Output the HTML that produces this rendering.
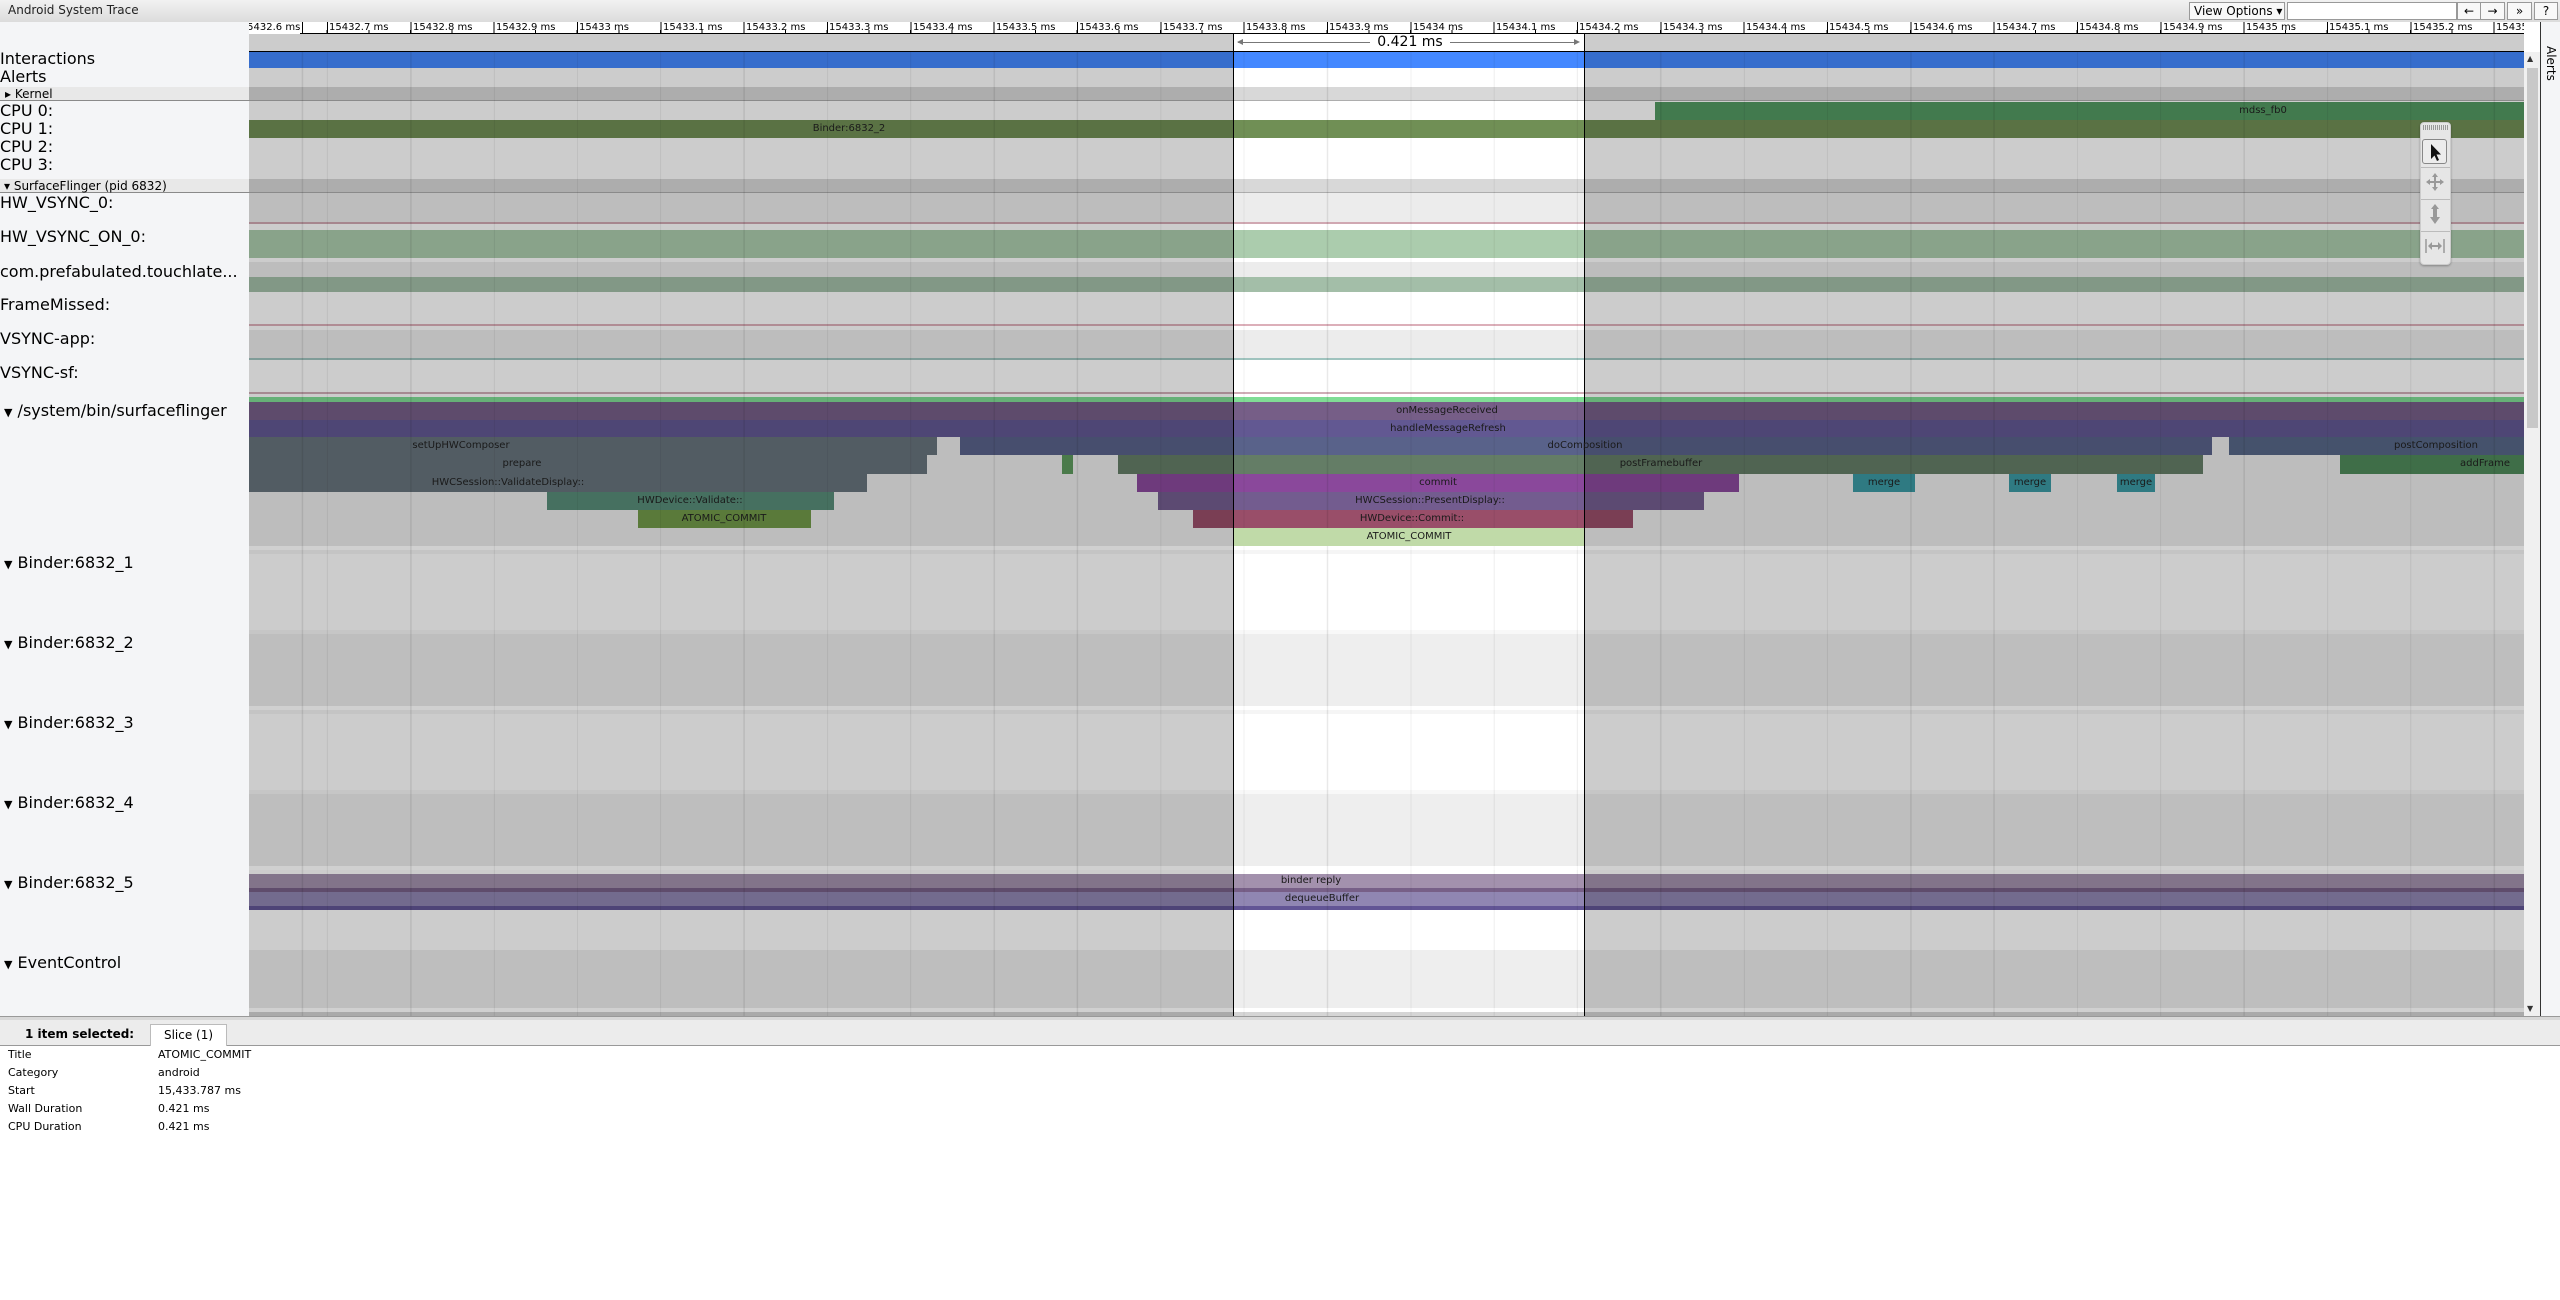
<!DOCTYPE html>
<html><head><meta charset="utf-8">
<style>
*{box-sizing:border-box}
body{margin:0;width:2560px;height:1300px;overflow:hidden;position:relative;background:#fff;font-family:"DejaVu Sans","Liberation Sans",sans-serif;color:#000}
.a{position:absolute}
.l{position:absolute;font-size:10px;color:#1a1a1a;text-align:center;white-space:nowrap;width:300px;line-height:18px}
.lab{position:absolute;left:0;font-size:16px;white-space:nowrap;line-height:18px}
.rl{position:absolute;top:22px;font-size:10px;line-height:12px;white-space:nowrap;color:#000}
.btn{position:absolute;top:2px;height:18px;border:1px solid #999;background:#f8f8f8;font-size:12px;line-height:16px;text-align:center}
.dt{position:absolute;font-size:11px;line-height:14px;white-space:nowrap}
</style></head><body>

<div class="a" style="left:0;top:0;width:2560px;height:22px;background:linear-gradient(#f2f2f2,#dcdcdc)"></div>
<div class="a" style="left:8px;top:3px;font-size:12px;line-height:15px;color:#222">Android System Trace</div>
<div class="btn" style="left:2189px;width:96px;text-align:left;padding-left:4px">View Options ▾</div>
<div class="btn" style="left:2287px;width:170px;background:#fff"></div>
<div class="btn" style="left:2457px;width:24px">←</div>
<div class="btn" style="left:2480px;width:25px">→</div>
<div class="btn" style="left:2507px;width:25px">»</div>
<div class="btn" style="left:2534px;width:24px">?</div>

<div class="a" style="left:0;top:22px;width:249px;height:994px;background:#f4f5f7"></div>

<div class="a" style="left:249px;top:22px;width:2275px;height:12px;background:#fff repeating-linear-gradient(to right,#000 0 1px,transparent 1px 83.333px);background-position:78px 0;overflow:hidden"></div>
<div class="a" style="left:249px;top:30px;width:2275px;height:4px;background:repeating-linear-gradient(to right,#000 0 1px,transparent 1px 41.666px);background-position:36px 0"></div>
<div class="a" style="left:249px;top:33px;width:2275px;height:1px;background:#000"></div>
<div class="a" style="left:249px;top:22px;width:2275px;height:12px;overflow:hidden">
<div class="rl" style="top:0;left:-5px;background:#fff">&nbsp;5432.6 ms</div>
<div class="rl" style="top:0;left:80px">15432.7 ms</div>
<div class="rl" style="top:0;left:164px">15432.8 ms</div>
<div class="rl" style="top:0;left:247px">15432.9 ms</div>
<div class="rl" style="top:0;left:330px">15433 ms</div>
<div class="rl" style="top:0;left:414px">15433.1 ms</div>
<div class="rl" style="top:0;left:497px">15433.2 ms</div>
<div class="rl" style="top:0;left:580px">15433.3 ms</div>
<div class="rl" style="top:0;left:664px">15433.4 ms</div>
<div class="rl" style="top:0;left:747px">15433.5 ms</div>
<div class="rl" style="top:0;left:830px">15433.6 ms</div>
<div class="rl" style="top:0;left:914px">15433.7 ms</div>
<div class="rl" style="top:0;left:997px">15433.8 ms</div>
<div class="rl" style="top:0;left:1080px">15433.9 ms</div>
<div class="rl" style="top:0;left:1164px">15434 ms</div>
<div class="rl" style="top:0;left:1247px">15434.1 ms</div>
<div class="rl" style="top:0;left:1330px">15434.2 ms</div>
<div class="rl" style="top:0;left:1414px">15434.3 ms</div>
<div class="rl" style="top:0;left:1497px">15434.4 ms</div>
<div class="rl" style="top:0;left:1580px">15434.5 ms</div>
<div class="rl" style="top:0;left:1664px">15434.6 ms</div>
<div class="rl" style="top:0;left:1747px">15434.7 ms</div>
<div class="rl" style="top:0;left:1830px">15434.8 ms</div>
<div class="rl" style="top:0;left:1914px">15434.9 ms</div>
<div class="rl" style="top:0;left:1997px">15435 ms</div>
<div class="rl" style="top:0;left:2080px">15435.1 ms</div>
<div class="rl" style="top:0;left:2164px">15435.2 ms</div>
<div class="rl" style="top:0;left:2247px">15435.3 ms</div>
</div>

<div class="a" style="left:249px;top:34px;width:2275px;height:982px;background:#cccccc"></div>
<div class="a" style="left:249px;top:51px;width:2275px;height:1px;background:#000"></div>
<div class="a" style="left:249px;top:52px;width:2275px;height:16px;background:#366dcc"></div>
<div class="a" style="left:0;top:87px;width:249px;height:14px;background:#e8e8e8"></div>
<div class="a" style="left:249px;top:87px;width:2275px;height:14px;background:#adadad"></div>
<div class="a" style="left:0;top:100px;width:2524px;height:1px;background:#8a8a8a"></div>
<div class="a" style="left:1655px;top:102px;width:869px;height:18px;background:#427a4e"></div>
<div class="a" style="left:249px;top:120px;width:2275px;height:18px;background:#5a7244"></div>
<div class="a" style="left:0;top:179px;width:249px;height:14px;background:#e8e8e8"></div>
<div class="a" style="left:249px;top:179px;width:2275px;height:14px;background:#adadad"></div>
<div class="a" style="left:0;top:192px;width:2524px;height:1px;background:#8a8a8a"></div>
<div class="a" style="left:249px;top:193px;width:2275px;height:29px;background:#bdbdbd"></div>
<div class="a" style="left:249px;top:222px;width:2275px;height:2px;background:#a6868e"></div>
<div class="a" style="left:249px;top:230px;width:2275px;height:28px;background:#89a38a"></div>
<div class="a" style="left:249px;top:262px;width:2275px;height:15px;background:#bdbdbd"></div>
<div class="a" style="left:249px;top:277px;width:2275px;height:15px;background:#829886"></div>
<div class="a" style="left:249px;top:324px;width:2275px;height:2px;background:#b08c94"></div>
<div class="a" style="left:249px;top:330px;width:2275px;height:28px;background:#bdbdbd"></div>
<div class="a" style="left:249px;top:358px;width:2275px;height:2px;background:#7f9c98"></div>
<div class="a" style="left:249px;top:392px;width:2275px;height:2px;background:#a68a92"></div>
<div class="a" style="left:249px;top:397px;width:2275px;height:5px;background:#66b077"></div>
<div class="a" style="left:249px;top:402px;width:2275px;height:18px;background:#5e4b6c"></div>
<div class="a" style="left:249px;top:420px;width:2275px;height:17px;background:#4e4675"></div>
<div class="a" style="left:249px;top:437px;width:2275px;height:109px;background:#bdbdbd"></div>
<div class="a" style="left:249px;top:437px;width:688px;height:18px;background:#525c63"></div>
<div class="a" style="left:960px;top:437px;width:1252px;height:18px;background:#474e6e"></div>
<div class="a" style="left:2229px;top:437px;width:295px;height:18px;background:#45526c"></div>
<div class="a" style="left:249px;top:455px;width:678px;height:19px;background:#525c63"></div>
<div class="a" style="left:1062px;top:455px;width:11px;height:19px;background:#4a7a4a"></div>
<div class="a" style="left:1118px;top:455px;width:1085px;height:19px;background:#506452"></div>
<div class="a" style="left:2340px;top:455px;width:184px;height:19px;background:#3f6e48"></div>
<div class="a" style="left:249px;top:474px;width:618px;height:18px;background:#525c63"></div>
<div class="a" style="left:1137px;top:474px;width:602px;height:18px;background:#6e3a7c"></div>
<div class="a" style="left:1853px;top:474px;width:62px;height:18px;background:#2f7a82"></div>
<div class="a" style="left:2009px;top:474px;width:42px;height:18px;background:#2f7a82"></div>
<div class="a" style="left:2117px;top:474px;width:38px;height:18px;background:#2f7a82"></div>
<div class="a" style="left:547px;top:492px;width:287px;height:18px;background:#467060"></div>
<div class="a" style="left:1158px;top:492px;width:546px;height:18px;background:#5c4a72"></div>
<div class="a" style="left:638px;top:510px;width:173px;height:18px;background:#5a7a3a"></div>
<div class="a" style="left:1193px;top:510px;width:440px;height:18px;background:#7a3e54"></div>
<div class="a" style="left:249px;top:546px;width:2275px;height:4px;background:#d0d0d0"></div>

<div class="a" style="left:249px;top:550px;width:2275px;height:4px;background:#c4c4c4"></div>
<div class="a" style="left:249px;top:630px;width:2275px;height:80px;background:#bebebe"></div>
<div class="a" style="left:249px;top:630px;width:2275px;height:4px;background:#c6c6c6"></div>
<div class="a" style="left:249px;top:706px;width:2275px;height:4px;background:#d0d0d0"></div>
<div class="a" style="left:249px;top:710px;width:2275px;height:4px;background:#c4c4c4"></div>
<div class="a" style="left:249px;top:790px;width:2275px;height:80px;background:#bebebe"></div>
<div class="a" style="left:249px;top:790px;width:2275px;height:4px;background:#c6c6c6"></div>
<div class="a" style="left:249px;top:866px;width:2275px;height:4px;background:#d0d0d0"></div>
<div class="a" style="left:249px;top:874px;width:2275px;height:14px;background:#82748a"></div>
<div class="a" style="left:249px;top:888px;width:2275px;height:4px;background:#5f4c6c"></div>
<div class="a" style="left:249px;top:892px;width:2275px;height:14px;background:#736b8e"></div>
<div class="a" style="left:249px;top:906px;width:2275px;height:4px;background:#4e4477"></div>
<div class="a" style="left:249px;top:950px;width:2275px;height:58px;background:#bebebe"></div>
<div class="a" style="left:249px;top:1008px;width:2275px;height:4px;background:#d0d0d0"></div>
<div class="a" style="left:249px;top:1012px;width:2275px;height:4px;background:#aaaaaa"></div>

<div class="a" style="left:249px;top:52px;width:2275px;height:964px;background:repeating-linear-gradient(to right,rgba(0,0,0,.09) 0 1px,transparent 1px 83.333px);background-position:78px 0"></div>

<div class="a" style="left:1233px;top:34px;width:351px;height:982px;backdrop-filter:brightness(1.25);-webkit-backdrop-filter:brightness(1.25)"></div>
<div class="a" style="left:1233px;top:528px;width:351px;height:18px;background:#c0daa8"></div>
<div class="a" style="left:1233px;top:34px;width:1px;height:982px;background:#000"></div>
<div class="a" style="left:1584px;top:34px;width:1px;height:982px;background:#000"></div>
<div class="a" style="left:1238px;top:42px;width:340px;height:1px;background:#777"></div>
<div class="a" style="left:1237px;top:39px;width:0;height:0;border-top:3px solid transparent;border-bottom:3px solid transparent;border-right:6px solid #777"></div>
<div class="a" style="left:1574px;top:39px;width:0;height:0;border-top:3px solid transparent;border-bottom:3px solid transparent;border-left:6px solid #777"></div>
<div class="a" style="left:1370px;top:34px;width:80px;height:17px;background:#fff;font-size:14px;line-height:17px;text-align:center">0.421 ms</div>

<div class="l" style="left:699px;top:120px">Binder:6832_2</div>
<div class="l" style="left:2113px;top:102px">mdss_fb0</div>
<div class="l" style="left:1297px;top:402px">onMessageReceived</div>
<div class="l" style="left:1298px;top:420px">handleMessageRefresh</div>
<div class="l" style="left:311px;top:437px">setUpHWComposer</div>
<div class="l" style="left:1435px;top:437px">doComposition</div>
<div class="l" style="left:2286px;top:437px">postComposition</div>
<div class="l" style="left:372px;top:455px">prepare</div>
<div class="l" style="left:1511px;top:455px">postFramebuffer</div>
<div class="l" style="left:2335px;top:455px">addFrame</div>
<div class="l" style="left:358px;top:474px">HWCSession::ValidateDisplay::</div>
<div class="l" style="left:1288px;top:474px">commit</div>
<div class="l" style="left:1734px;top:474px">merge</div>
<div class="l" style="left:1880px;top:474px">merge</div>
<div class="l" style="left:1986px;top:474px">merge</div>
<div class="l" style="left:540px;top:492px">HWDevice::Validate::</div>
<div class="l" style="left:1280px;top:492px">HWCSession::PresentDisplay::</div>
<div class="l" style="left:574px;top:510px">ATOMIC_COMMIT</div>
<div class="l" style="left:1262px;top:510px">HWDevice::Commit::</div>
<div class="l" style="left:1259px;top:528px">ATOMIC_COMMIT</div>
<div class="l" style="left:1161px;top:872px">binder reply</div>
<div class="l" style="left:1172px;top:890px">dequeueBuffer</div>

<div class="lab" style="top:50px">Interactions</div>
<div class="lab" style="top:68px">Alerts</div>
<div class="lab" style="top:86px;left:5px;font-size:12px;line-height:16px">▸ Kernel</div>
<div class="lab" style="top:102px">CPU 0:</div>
<div class="lab" style="top:120px">CPU 1:</div>
<div class="lab" style="top:138px">CPU 2:</div>
<div class="lab" style="top:156px">CPU 3:</div>
<div class="lab" style="top:178px;left:4px;font-size:12px;line-height:16px">▾ SurfaceFlinger (pid 6832)</div>
<div class="lab" style="top:194px">HW_VSYNC_0:</div>
<div class="lab" style="top:228px">HW_VSYNC_ON_0:</div>
<div class="lab" style="top:263px">com.prefabulated.touchlate...</div>
<div class="lab" style="top:296px">FrameMissed:</div>
<div class="lab" style="top:330px">VSYNC-app:</div>
<div class="lab" style="top:364px">VSYNC-sf:</div>
<div class="lab" style="top:402px;left:4px"><span style="font-size:11px">▼</span> /system/bin/surfaceflinger</div>
<div class="lab" style="top:554px;left:4px"><span style="font-size:11px">▼</span> Binder:6832_1</div>
<div class="lab" style="top:634px;left:4px"><span style="font-size:11px">▼</span> Binder:6832_2</div>
<div class="lab" style="top:714px;left:4px"><span style="font-size:11px">▼</span> Binder:6832_3</div>
<div class="lab" style="top:794px;left:4px"><span style="font-size:11px">▼</span> Binder:6832_4</div>
<div class="lab" style="top:874px;left:4px"><span style="font-size:11px">▼</span> Binder:6832_5</div>
<div class="lab" style="top:954px;left:4px"><span style="font-size:11px">▼</span> EventControl</div>

<div class="a" style="left:2524px;top:52px;width:16px;height:964px;background:#f0f0f0"></div>
<div class="a" style="left:2527px;top:68px;width:11px;height:360px;background:#c8c8c8"></div>
<div class="a" style="left:2527px;top:54px;font-size:8px;color:#333">▲</div>
<div class="a" style="left:2527px;top:1004px;font-size:8px;color:#333">▼</div>
<div class="a" style="left:2540px;top:22px;width:1px;height:994px;background:#333"></div>
<div class="a" style="left:2541px;top:22px;width:19px;height:994px;background:#f4f5f7"></div>
<div class="a" style="top:46px;font-size:12px;transform:rotate(90deg);transform-origin:0 0;left:2558px">Alerts</div>

<div class="a" style="left:2420px;top:122px;width:31px;height:143px;background:#e6e6e6;border:1px solid #ccc;border-radius:4px;box-shadow:0 1px 2px rgba(0,0,0,.3)"></div>
<div class="a" style="left:2423px;top:125px;width:25px;height:5px;background:repeating-linear-gradient(to right,#999 0 1px,transparent 1px 2px)"></div>
<div class="a" style="left:2422px;top:139px;width:25px;height:25px;border:1px solid #888;border-radius:3px;background:#ececec"></div>
<svg class="a" style="left:2422px;top:139px" width="26" height="26" viewBox="0 0 26 26"><path d="M9 5 L9 20 L12.5 16.5 L15 22 L17 21 L14.5 15.5 L19 15.5 Z" fill="#111"/></svg>
<svg class="a" style="left:2423px;top:170px" width="24" height="24" viewBox="0 0 24 24"><path d="M12 3 L15 7 H13 V11 H17 V9 L21 12 L17 15 V13 H13 V17 H15 L12 21 L9 17 H11 V13 H7 V15 L3 12 L7 9 V11 H11 V7 H9 Z" fill="#999"/></svg>
<svg class="a" style="left:2423px;top:202px" width="24" height="24" viewBox="0 0 24 24"><path d="M12 2 L16 7 H14 V15 H17 L12 22 L7 15 H10 V7 H8 Z" fill="#999"/></svg>
<svg class="a" style="left:2423px;top:234px" width="24" height="24" viewBox="0 0 24 24"><path d="M3 5 V19 M21 5 V19" stroke="#999" stroke-width="1.5"/><path d="M5 12 L9 8 V11 H15 V8 L19 12 L15 16 V13 H9 V16 Z" fill="#999"/></svg>
<div class="a" style="left:2421px;top:167px;width:29px;height:1px;background:#bbb"></div>
<div class="a" style="left:2421px;top:199px;width:29px;height:1px;background:#bbb"></div>
<div class="a" style="left:2421px;top:231px;width:29px;height:1px;background:#bbb"></div>

<div class="a" style="left:0;top:1016px;width:2560px;height:4px;background:#d8d8d8;border-top:1px solid #999"></div>
<div class="a" style="left:0;top:1020px;width:2560px;height:26px;background:#ececec;border-bottom:1px solid #999"></div>
<div class="a" style="left:25px;top:1026px;font-size:12px;font-weight:bold;line-height:16px">1 item selected:</div>
<div class="a" style="left:150px;top:1024px;width:77px;height:22px;background:#fff;border:1px solid #bbb;border-bottom:none;font-size:12px;line-height:20px;text-align:center">Slice (1)</div>
<div class="dt" style="left:8px;top:1048px">Title</div><div class="dt" style="left:158px;top:1048px">ATOMIC_COMMIT</div>
<div class="dt" style="left:8px;top:1066px">Category</div><div class="dt" style="left:158px;top:1066px">android</div>
<div class="dt" style="left:8px;top:1084px">Start</div><div class="dt" style="left:158px;top:1084px">15,433.787 ms</div>
<div class="dt" style="left:8px;top:1102px">Wall Duration</div><div class="dt" style="left:158px;top:1102px">0.421 ms</div>
<div class="dt" style="left:8px;top:1120px">CPU Duration</div><div class="dt" style="left:158px;top:1120px">0.421 ms</div>
</body></html>
